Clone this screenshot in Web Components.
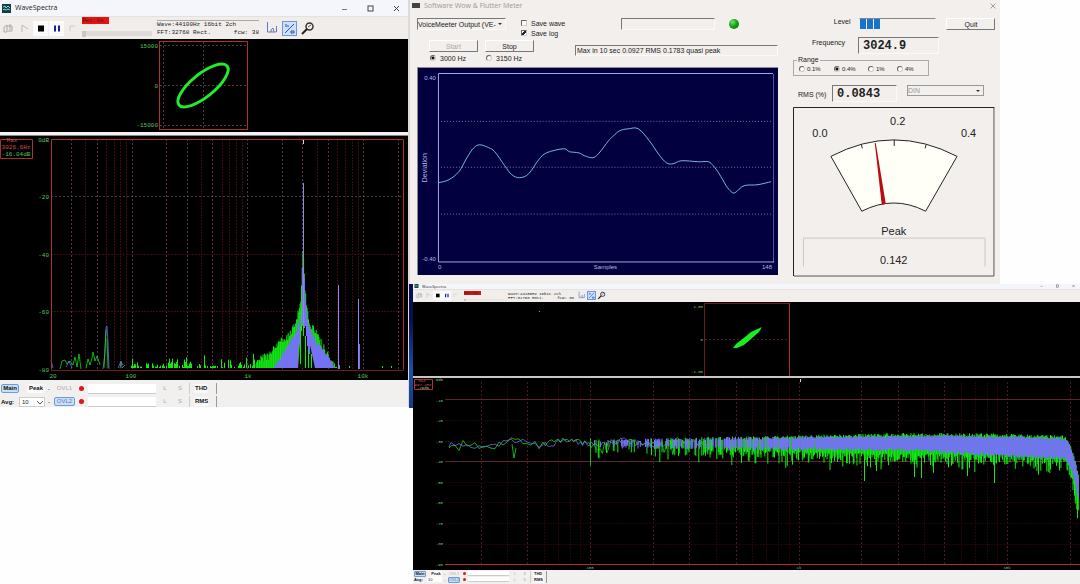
<!DOCTYPE html>
<html lang="en">
<head>
<meta charset="utf-8">
<title>Audio measurement desktop</title>
<style>
  body { margin: 0; background: #fefefe; font-family: "Liberation Sans", Arial, sans-serif; }
</style>
</head>
<body>
<measure-desktop>
  <wave-window slot="left" view="tone"></wave-window>
  <flutter-window slot="meter"></flutter-window>
  <wave-window slot="noise" view="noise" compact></wave-window>
</measure-desktop>

<script>
const define = (name, html, ready) => {
  const template = document.createElement('template');
  template.innerHTML = html;
  customElements.define(name, class extends HTMLElement {
    connectedCallback() {
      if (this.shadowRoot) return;
      this.attachShadow({ mode: 'open' }).append(template.content.cloneNode(true));
      if (ready) ready(this.shadowRoot, this);
    }
  });
};

const random = seed => () => (seed = (seed * 1664525 + 1013904223) % 4294967296) / 4294967296;
// Linear interpolation through a list of [x, y] knots.
const curve = (knots, x) => {
  for (let i = 1; i < knots.length; i++) {
    if (x <= knots[i][0]) {
      const [a, b] = knots[i - 1], [c, d] = knots[i];
      return b + (d - b) * (x - a) / (c - a);
    }
  }
  return knots[knots.length - 1][1];
};
const r1 = n => Math.round(n * 10) / 10;

/* ---------- spectrum with logarithmic frequency axis ---------- */
const logGrid = (x100, decade, top, bottom, right) => {
  let out = '';
  for (let d = 10; d <= 10000; d *= 10) for (let k = 1; k < 10; k++) {
    const f = d * k;
    if (f <= 20) continue;
    const x = Math.floor(x100 + decade * Math.log10(f / 100)) + 0.5;
    if (x < right) out += `<path class="${[1, 2, 3, 5].includes(k) ? 'major' : 'minor'}" d="M${x} ${top}V${bottom}"/>`;
  }
  return out;
};

function toneSpectrum() {
  const rnd = random(11);
  let green = '', blue = '';
  const skirt = [[254,367],[262,362],[270,357],[282,344],[290,336],[297,322],[301,300],[303,247],[305,290],[307,307],[310,326],[318,337],[327,355],[336,370]];
  for (let x = 52; x < 402; x += 1) {
    if (x < 258 || x > 337) {
      if (x > 130 && rnd() < 0.6 && x < 258) green += `M${x + .5} 232V${r1(231 - rnd() * rnd() * 14)}`;
      else if (x > 337 && rnd() < 0.06) green += `M${x + .5} 232v-2`;
    }
  }
  for (let x = 256; x < 337; x += 0.7) {
    const top = curve(skirt, x) - 138, h = 232 - top;
    green += `M${r1(x)} 232V${r1(Math.min(231, top + rnd() * 9 - (x < 300 ? 5 : 3)))}`;
  }
  const inner = [[274,232],[285,214],[293,202],[298,190],[301,175],[303,130],[305,165],[308,184],[313,200],[320,210],[327,219],[335,232]];
  for (let x = 275; x < 334; x += 0.6) {
    if (x > 298 && x < 310) continue;
    blue += `M${r1(x)} 232V${r1(Math.min(231, curve(inner, x) + rnd() * 7 - 3))}`;
  }
  return `<svg viewBox="0 0 408 244" role="img" aria-label="Spectrum, 3 kHz tone">
    <rect width="408" height="244"/>
    <g class="grid">${logGrid(132, 115.7, 3, 234, 404)}
      <path class="major" d="M51 60.5H404"/><path class="minor" d="M51 118.5H404M51 175.5H404"/></g>
    <path class="g" d="${green}"/>
    <path class="g soft" d="M60 233l2-8 3-1 2 4 3-3 3 4 2-8 2 10 2-13 2 15M86 232l2-9 2 6 2-7 1-6 2 9 2-5 3 9M120 232l1-6 2 3"/>
    <path class="b soft" d="M51 224l2 8M66 231l3-6 3 7M103 233l2-16 1-26 1-1 1 17 1 26M118 232l3-7 1 7 3-3"/>
    <path class="g soft" d="M104 232l1-20 1-18M107 203l1 29"/>
    <path class="b" d="${blue}"/>
    <path class="hole" d="M298 232L302 182 304 172 308 200 315 232Z"/>
    <path class="g" d="M300.500 228V177M301.500 195V165M303.500 200V150M305.500 232V200M308.500 232V212M311.500 232V218"/>
    <path class="g" d="M303.500 150V110"/>
    <path class="b" d="M302.500 190V132M304.500 192V142M305.500 190V165M306.500 200V175M298.500 212V190M299.500 208V184M300.500 190V178M307.500 210V184M308.500 214V188M309.500 218V194"/>
    <path class="b pale" d="M303.500 185V47M338.500 233V149M358.500 233V163"/><path class="b" d="M359.500 233V208M339.500 233v-4"/>
    <path class="pale white" d="M303.500 3v5"/>
    <path class="frame" d="M51.500 233.500V3.500H403.500V233.500"/><path class="frame dim" d="M51 234.500H404"/>
    <g class="lab end"><text x="49" y="6">0dB</text><text x="49" y="63">-20</text><text x="49" y="121">-40</text><text x="49" y="178">-60</text><text x="49" y="236">-80</text></g>
    <g class="lab mid"><text x="53" y="242">20</text><text x="131" y="242">100</text><text x="248" y="242">1k</text><text x="363" y="242">10k</text></g>
    <path class="frame" d="M1 3.500H32.500V22.500H.500V3.500"/>
    <g class="lab mid"><text class="red" x="12" y="6">Max</text><text class="red" x="16" y="13">3026.6Hz</text><text x="16" y="20">-16.04dB</text></g>
  </svg>`;
}

function noiseSpectrum() {
  const rnd = random(5);
  let thin = 'M36 70', thinBlue = 'M36 69', green = '', blue = '';
  for (let x = 38; x < 300; x += x < 130 ? 4 : 2.2) {
    const wave = Math.sin(x / 9) * 2 + (x < 90 ? 4 - x / 30 : 0);
    thinBlue += `L${r1(x)} ${r1(65 + wave + (rnd() - .5) * 6)}`;
    thin += `L${r1(x)} ${r1(65 + wave + (rnd() - .5) * 8 + (rnd() < .08 ? 9 : 0))}`;
  }
  const edge = x => x < 650 ? 0 : Math.pow((x - 650) / 16, 2) * 42;
  for (let x = 180; x < 666; x += 0.75) {
    const t = Math.min(1, (x - 160) / 330), e = edge(x);
    const dense = Math.min(1, (x - 180) / 260);
    if (rnd() < .1 + dense) {
      const top = 66 - t * 7 - rnd() * 4 + e + Math.max(0, x - 560) / 40;
      const drop = 67 + t * 9 + rnd() * rnd() * (14 + t * 6) + e * 1.3 + Math.max(0, x - 590) / 14;
      green += `M${r1(x)} ${r1(top)}V${r1(drop)}`;
    }
    if (rnd() < .1 + dense) {
      const top = 64 - t * 4 - rnd() * 3 + e + Math.max(0, x - 560) / 40;
      const low = 66 + t * 4 + rnd() * 4 + e + Math.max(0, x - 500) / 18;
      blue += `M${r1(x)} ${r1(top)}V${r1(low)}`;
    }
  }
  const h = [42.5, 63.5, 104.5, 124.5, 145.5, 166.5].map(y => `<path class="minor" d="M32 ${y}H667"/>`).join('');
  const names = ['0dB', '-10', '-20', '-30', '-40', '-50', '-60', '-70', '-80', '-90'];
  return `<svg viewBox="0 0 667 192" role="img" aria-label="Spectrum, noise">
    <rect width="667" height="192"/>
    <g class="grid">${logGrid(177.5, 208.5, 4, 186, 666)}${h}
      <path class="strong" d="M32 21.500H667M32 83.500H667"/></g>
    <path class="g soft" d="${thin}M99 66l2 14 2-10M177.500 60V88"/>
    <path class="b soft" d="${thinBlue}"/>
    <path class="g" d="${green}M451.500 70V103M508.500 75V100M581.500 78V105M554.500 75V98M501.500 75V99"/>
    <path class="b" d="${blue}"/>
    <path class="white pale" d="M387.500 1v3"/>
    <path class="frame" d="M32 186.500H667"/>
    <g class="lab end small">${names.map((n, i) => `<text x="30" y="${Math.round(3 + i * 20.5)}">${n}</text>`).join('')}</g>
    <g class="lab mid small"><text x="177" y="191">100</text><text x="386" y="191">1k</text><text x="594" y="191">10k</text></g>
    <path class="frame" d="M1.500 1.500H19.500V11.500H1.500Z"/>
    <g class="lab mid small"><text class="red" x="9" y="4">Max</text><text class="red" x="10" y="8">997.2Hz</text><text x="10" y="11">-29dB</text></g>
  </svg>`;
}

const toneScope = `<svg viewBox="0 0 408 93" role="img" aria-label="Lissajous figure"><rect width="408" height="93"/>
  <path class="major" d="M160 46.500H247M203.500 3V90M160 6.500H247M160 86.500H247M163.500 3V90"/>
  <rect class="box" x="159.500" y="2.500" width="88" height="88"/>
  <ellipse class="ring" cx="203" cy="46.500" rx="31" ry="11.500" transform="rotate(-39 203 46.500)"/>
  <g class="lab end"><text x="158" y="9">15000</text><text x="158" y="49">0</text><text x="158" y="88">-15000</text></g></svg>`;
const noiseScope = `<svg viewBox="0 0 667 74" role="img" aria-label="Lissajous figure"><rect width="667" height="74"/>
  <path class="major" d="M292 37.500H376"/><path class="frame dim" d="M291.500 74V1.500H376"/><path class="frame" d="M376.500 1V74"/>
  <path class="blob" d="M320 46l3-4 9-7 6-5 11-5-3 5-8 7-7 6-7 3z"/><path class="blob" d="M126 9h1v1h-1z"/>
  <g class="lab end small"><text x="290" y="6">1.00</text><text x="290" y="39">0</text><text x="290" y="71">-1.00</text></g></svg>`;

define('signal-plot', `<style>
  :host { display: block; background: #000; }
  svg { display: block; width: 100%; height: auto; fill: none; font-family: "Liberation Mono", monospace; }
  svg > rect:first-child { fill: #000; }
  .major { stroke: #5c363a; stroke-dasharray: 2 2; } .minor { stroke: #3c0c10; stroke-dasharray: 2 1; }
  .strong { stroke: #612529; }
  :host([kind^="noise"]) .major { stroke: #481a1e; } :host([kind^="noise"]) .minor { stroke: #240607; }
  .frame, .box { stroke: #a83232; } .dim { stroke: #701a1e; }
  .g { stroke: #12ea12; } .b { stroke: #796eff; } .soft { stroke-opacity: .75; }
  .pale { stroke: #9088e0; } .white { stroke: #ecc; } .hole { fill: #041204; }
  .ring { stroke: #22ec2c; stroke-width: 3; } .blob { fill: #18ee20; }
  .lab { fill: #5cc05c; font-size: 6px; } .small { fill: #7ad07a; font-size: 4px; }
  .end { text-anchor: end; } .mid { text-anchor: middle; } .red { fill: #d05050; }
</style><div></div>`, (root, host) => {
  const make = { tone: toneSpectrum, noise: noiseSpectrum, 'tone-scope': () => toneScope, 'noise-scope': () => noiseScope };
  root.querySelector('div').innerHTML = make[host.getAttribute('kind')]();
});

/* ---------- title bar ---------- */
define('title-bar', `<style>
  :host { display: flex; align-items: center; height: 16px; gap: 4px; padding: 0 7px 0 2px; background: #f5f6fb; color: #222; font: 7px/10px "Open Sans", sans-serif; }
  :host([compact]) { height: 5px; gap: 3px; padding: 0 3px 0 1px; font-size: 4px; line-height: 5px; }
  svg { width: 9px; height: 9px; } :host([compact]) svg { width: 5px; height: 4px; }
  .name { flex: 1; }
  button { all: unset; width: 9px; height: 9px; margin-left: 13px; }
  :host([compact]) button { width: 6px; height: 4px; margin-left: 7px; }
  button svg { display: block; width: 100%; height: 100%; fill: none; stroke: #444; }
</style>
<svg viewBox="0 0 9 9"><rect width="9" height="9" fill="#123f46"/><path d="M1 3l2-1 1 2 2-2 2 2M1 6l1-1 2 1 2-1 2 1" fill="none" stroke="#8fd6d2"/></svg>
<span class="name"><slot></slot></span>
<button aria-label="Minimize"><svg viewBox="0 0 9 9"><path d="M2 5.500h5" stroke-width=".7"/></svg></button>
<button aria-label="Maximize"><svg viewBox="0 0 9 9"><rect x="2" y="2" width="5" height="5"/></svg></button>
<button aria-label="Close"><svg viewBox="0 0 9 9"><path d="M2 2l5 5M7 2l-5 5"/></svg></button>`);

/* ---------- WaveSpectra toolbar ---------- */
define('wave-toolbar', `<style>
  :host { display: flex; align-items: center; height: 23px; box-sizing: border-box; background: #f0edeb; color: #222; font: 6px/8px "Liberation Mono", monospace; border-top: 1px solid #e4e1e0; }
  button { all: unset; flex: none; width: 15px; height: 15px; } button svg { display: block; width: 100%; height: 100%; fill: none; }
  .play { display: flex; flex: none; width: 82px; gap: 1px; padding-left: 1px; box-sizing: border-box; }
  .play button:nth-child(3), .play button:nth-child(4) { background: #fbfbfc; }
  .pos { flex: none; width: 71px; align-self: stretch; display: flex; flex-direction: column; }
  .pos b { display: block; width: 27px; height: 7px; background: #e51414; color: #6b0808; font-weight: 400; line-height: 7px; white-space: nowrap; }
  input { appearance: none; margin: 7px 0 0; width: 70px; height: 5px; background: #dedbd9; }
  input::-webkit-slider-thumb { appearance: none; width: 4px; height: 6px; background: #c9c6c4; }
  .info { flex: none; width: 102px; margin: 0 5px 0 4px; display: flex; flex-wrap: wrap; justify-content: space-between; white-space: nowrap; border-top: 1px solid #aaa; }
  .info span:first-child { width: 100%; }
  .icons { display: flex; gap: 3px; } .icons .on { background: #cfe0fb; box-shadow: 0 0 0 1px #6f95dd inset; }
  :host([compact]) { height: 13px; font-size: 4px; line-height: 4px; }
  :host([compact]) button { width: 9px; height: 9px; }
  :host([compact]) .play { width: 51px; gap: 0; padding-left: 2px; }
  :host([compact]) .pos { width: 44px; } :host([compact]) .pos b { width: 17px; height: 4px; line-height: 4px; margin-top: 1px; background: #c81c1c; }
  :host([compact]) input { width: 40px; height: 2px; margin-top: 4px; background: #e8e5e3; }
  :host([compact]) input::-webkit-slider-thumb { width: 2px; height: 2px; }
  :host([compact]) .info { width: 66px; margin: 0 3px 0 0; border: 0; }
  :host([compact]) .icons { gap: 1px; }
</style>
<div class="play">
  <button aria-label="Open"><svg viewBox="0 0 15 15" stroke="#aaa"><path d="M3 11V6l3-2v7zM6 5h5v5H7M9 3v6"/></svg></button>
  <button aria-label="Play"><svg viewBox="0 0 15 15" stroke="#bbb"><path d="M5 11V4l6 4"/></svg></button>
  <button aria-label="Stop"><svg viewBox="0 0 15 15"><path d="M5 4.500h6v6H5z" fill="#000"/></svg></button>
  <button aria-label="Pause"><svg viewBox="0 0 15 15"><path d="M5 4.500h2v6H5zM9 4.500h2v6H9z" fill="#1420a8"/></svg></button>
  <button aria-label="Record"><svg viewBox="0 0 15 15" stroke="#ccc"><path d="M5 10V5h5"/></svg></button>
</div>
<div class="pos"><b>Rec:0s</b><input type="range" value="0" aria-label="Position"></div>
<div class="info"><span>Wave:44100Hz 16bit 2ch</span><span>FFT:32768 Rect.</span><span>fcw: 38</span></div>
<div class="icons">
  <button aria-label="Wave view"><svg viewBox="0 0 15 15" stroke="#6677bb"><path d="M3.500 1v10H12M7 11V9l2-2 1 4M12.500 5v6"/></svg></button>
  <button class="on" aria-label="Log scale"><svg viewBox="0 0 15 15" stroke="#264fb5"><path d="M3 12L12 3M4 3v3M6 4v2M9 10h3v2H9z"/></svg></button>
  <button aria-label="Settings"><svg viewBox="0 0 15 15"><circle cx="9.500" cy="5.500" r="3.500" stroke="#333" stroke-width="1.500"/><path d="M7 8l-5 5" stroke="#222" stroke-width="2"/><path d="M8 6l3-2" stroke="#555"/></svg></button>
</div>`);

/* ---------- WaveSpectra bottom controls ---------- */
define('wave-controls', `<style>
  :host { display: grid; grid-template-columns: 44px 3px 21px 7px 68px 12px 12px 28px; column-gap: 3px; row-gap: 2px; align-items: center; height: 27px; padding: 3px 0 0 1px; box-sizing: border-box; background: #f2f0ee; color: #111; font: 6px/8px "Liberation Sans", sans-serif; }
  button { all: unset; height: 9px; box-sizing: border-box; text-align: center; border: 1px solid transparent; border-radius: 2px; line-height: 7px; }
  .on { border-color: #6d9bd8; background: #cadff5; } .dim { color: #aaa; } .blue { color: #5878c8; }
  .first { display: flex; justify-content: space-between; align-items: center; font-weight: 700; }
  .first button { width: 18px; } .box { background: #fafafa; }
  i { justify-self: center; width: 5px; height: 5px; border-radius: 50%; background: #e01616; }
  input, select { appearance: none; box-sizing: border-box; margin: 0; padding: 0 2px; border: 1px solid #ccc; border-width: 0 0 1px; border-radius: 0; background: #fff; font: inherit; font-weight: 400; height: 10px; width: 100%; }
  select { width: 26px; border-width: 1px; color: #222;
    background: linear-gradient(45deg, transparent 40%, #555 40% 65%, transparent 65%) 17px 3px / 3px 3px no-repeat, linear-gradient(-45deg, transparent 40%, #555 40% 65%, transparent 65%) 20px 3px / 3px 3px no-repeat #fff; }
  .last { box-sizing: border-box; border-left: 1px solid #ccc; border-right: 1px solid #999; padding: 1px 4px; font-weight: 700; }
  .last button { display: block; background: #fafafa; }
  :host([compact]) { height: 15px; font-size: 4px; line-height: 5px; grid-template-columns: 28px 2px 12px 4px 41px 8px 7px 17px; column-gap: 2px; row-gap: 0; padding: 1px 0 1px 1px; border-bottom: 1px solid #ccc; }
  :host([compact]) button { height: 6px; line-height: 4px; border-radius: 1px; } :host([compact]) .first button { width: 12px; }
  :host([compact]) input, :host([compact]) select { height: 5px; padding: 0 1px; } :host([compact]) select { width: 15px; border-width: 0; background: #fff; }
  :host([compact]) i { width: 3px; height: 3px; } :host([compact]) .last { padding: 0 2px; }
</style>
<div class="first"><button class="on">Main</button><button class="box">Peak</button></div><span>-</span><button class="dim">OVL1</button><i></i><input aria-label="Overlay 1 name"><button class="dim">L</button><button class="dim">S</button><div class="last"><button>THD</button></div>
<div class="first"><label for="avg">Avg:</label><select id="avg"><option>10</option></select></div><span>-</span><button class="on blue">OVL2</button><i></i><input aria-label="Overlay 2 name"><button class="dim">L</button><button class="dim">S</button><div class="last"><button>RMS</button></div>`);

define('wave-window', `<style>
  :host { display: block; background: #f2f0ee; }
  .split { height: 4px; background: #f4f2f0; border-bottom: 1px solid #888; box-sizing: border-box; }
  :host([compact]) .split { height: 2px; border: 0; background: #c9c6c6; }
</style>
<title-bar>WaveSpectra</title-bar><wave-toolbar></wave-toolbar>
<div class="scope"></div><div class="split"></div><div class="spectrum"></div>
<wave-controls></wave-controls>`, (root, host) => {
  if (host.hasAttribute('compact')) root.querySelectorAll('title-bar, wave-toolbar, wave-controls').forEach(e => e.setAttribute('compact', ''));
  const view = host.getAttribute('view');
  for (const [cls, kind] of [['scope', view + '-scope'], ['spectrum', view]]) {
    const plot = document.createElement('signal-plot');
    plot.setAttribute('kind', kind);
    root.querySelector('.' + cls).append(plot);
  }
});

/* ---------- wow & flutter pieces ---------- */
define('deviation-graph', `<style>
  :host { display: block; border: 1px solid #8a8a90; border-width: 1px 0 0 1px; box-sizing: border-box; background: #02003e; }
  svg { display: block; width: 100%; height: auto; fill: none; }
  text { fill: #b8b6ea; font: 6px "Liberation Sans", sans-serif; } .axis { stroke: #a9a7e2; } .edge { stroke: #5654a0; }
  .dots { stroke: #7775ac; stroke-dasharray: 1 2; } .trace { stroke: #76b7e0; }
  .side { font-size: 7px; }
</style>
<svg viewBox="416 67 361 208" role="img" aria-label="Deviation over samples">
  <path class="dots" d="M439 120.500H772M439 166.500H772M439 213.500H772"/>
  <path class="edge" d="M772.500 73V262"/><path class="axis" d="M772 72.500H436.500V261.500H773"/>
  <polyline class="trace" points=""/>
  <text x="434" y="79" text-anchor="end">0.40</text><text x="434" y="261" text-anchor="end">-0.40</text>
  <text x="436" y="269">0</text><text x="604" y="269" text-anchor="middle">Samples</text><text x="771" y="269" text-anchor="end">148</text>
  <text class="side" transform="translate(425 167) rotate(-90)" text-anchor="middle">Deviation</text>
</svg>`, root => {
  const p = [[437,182],[447,179],[457,171],[465,157],[472,147],[478,144],[487,147],[493,151],[503,165],[510,174],[518,177],[527,173],[537,159],[545,152],[562,148],[568,151],[577,152],[583,155],[591,157],[597,153],[607,140],[610,137],[618,130],[627,128],[637,128],[648,140],[657,153],[665,162],[672,163],[680,160],[697,161],[707,161],[712,165],[718,173],[725,185],[730,191],[734,192],[743,185],[757,184],[770,181]];
  // Catmull-Rom sampling gives the smooth trace through the measured values.
  const out = [];
  for (let i = 0; i < p.length - 1; i++) {
    const a = p[i - 1] || p[i], b = p[i], c = p[i + 1], d = p[i + 2] || c;
    for (let t = 0; t < 1; t += .25) out.push([0, 1].map(k => r1(.5 * (2 * b[k] + (c[k] - a[k]) * t + (2 * a[k] - 5 * b[k] + 4 * c[k] - d[k]) * t * t + (3 * b[k] - a[k] - 3 * c[k] + d[k]) * t * t * t))).join());
  }
  root.querySelector('polyline').setAttribute('points', out.join(' ') + ' 770,181');
});

define('needle-meter', `<style>
  :host { display: block; } svg { display: block; width: 100%; height: auto; fill: none; stroke: #222; }
  text { fill: #222; stroke: none; font: 11px "Liberation Sans", sans-serif; text-anchor: middle; }
</style>
<svg viewBox="793 107 203 170" role="img" aria-label="Peak meter">
  <path d="M994.500 108V276.500H794" stroke="#555"/><path d="M793.500 276.500V107.500H995" stroke="#222"/>
  <path fill="#fffff8" d="M831 156.500Q894 123.500 957.500 156.500L926 211.500Q894 195 862 211.500Z"/>
  <path d="M861.500 144.500l1 4M894.500 140v6M926.500 144.500l-1 4"/>
  <path fill="#b80c10" stroke="none" d="M875 143h1L886 204l-4 1z"/>
  <text x="820" y="137">0.0</text><text x="898" y="125">0.2</text><text x="969" y="137">0.4</text><text x="894" y="235">Peak</text>
  <path d="M803.500 267V238.500H985.500V267" stroke="#ccc8c6"/><text x="894" y="264">0.142</text>
</svg>`);

define('flutter-window', `<style>
  :host { display: block; background: #f2efed; color: #222; font: 7px/9px "Liberation Sans", sans-serif; }
  header { display: flex; align-items: center; height: 11px; gap: 4px; padding: 0 3px 0 2px; color: #999; font-family: "Open Sans", sans-serif; }
  header span { flex: 1; } header i { width: 8px; height: 5px; background: #444; } header button { all: unset; width: 8px; height: 8px; }
  header svg { display: block; stroke: #888; fill: none; }
  main { display: grid; grid-template-columns: 362fr 203fr; column-gap: 15px; padding: 7px 5px 7px 7px; }
  .row { display: flex; align-items: flex-start; }
  button.push { appearance: none; box-sizing: border-box; width: 49px; height: 12px; flex: none; margin: 0; padding: 0; border: 1px solid; border-color: #fff #777 #777 #fff; background: #f2efed; color: #222; font: inherit; line-height: 9px; }
  button.push:disabled { color: #aaa; }
  .sunk { box-sizing: border-box; border: 1px solid; border-color: #777 #fafafa #fafafa #777; background: transparent; }
  select { appearance: none; box-sizing: border-box; width: 89px; height: 12px; margin: 0; padding: 0 8px 0 0; border-radius: 0; font: inherit; color: #222; opacity: 1; flex: none; }
  .pick { position: relative; display: block; flex: none; } .pick::after { content: ""; position: absolute; right: 4px; top: 5px; border: 2px solid transparent; border-top-color: #333; }
  .pick select:disabled { width: 77px; color: #999; height: 11px; border-color: #999; }
  label { display: flex; align-items: center; gap: 4px; height: 10px; white-space: nowrap; }
  input { appearance: none; margin: 0; width: 6px; height: 6px; box-sizing: border-box; background: #fff; border: 1px solid; border-color: #666 #ccc #ccc #666; flex: none; }
  input[type=radio] { border-radius: 50%; } input[type=radio]:checked { background: radial-gradient(circle, #111 0 1px, #fff 2px); }
  input[type=checkbox]:checked { background: linear-gradient(135deg, #fff 35%, #222 35% 65%, #fff 65%); }
  .top { height: 22px; } .checks { margin: 0 0 0 15px; flex: 1; } .level-in { width: 94px; height: 12px; flex: none; }
  .led { width: 10px; height: 10px; margin: 1px 39px 0 14px; border-radius: 50%; background: radial-gradient(circle at 35% 30%, #6fe86f, #19a419 45%, #0a6a0a); flex: none; }
  .mid { height: 27px; padding-left: 12px; } .col { width: 56px; flex: none; } .col label { margin-top: 1px; padding-left: 1px; }
  .log { flex: 1; margin: 5px 0 0 34px; height: 11px; white-space: nowrap; padding-left: 1px; }
  .r1 { height: 19px; justify-content: flex-end; } .r1 .cap { margin-right: 9px; line-height: 7px; }
  .level { display: flex; gap: 1px; width: 77px; height: 12px; margin-right: 10px; flex: none; border-color: #888 transparent transparent; }
  .level b { width: 6px; background: #1874c8; }
  .r2 { padding-left: 19px; height: 19px; } .r2 .cap { width: 46px; padding-top: 1px; }
  output { display: block; height: 17px; padding-left: 4px; font: 700 12px/16px "Liberation Mono", monospace; color: #222; }
  .r2 output { width: 81px; }
  fieldset { min-width: 0; width: 136px; height: 20px; box-sizing: border-box; margin: 0; padding: 0 0 0 5px; border: 1px solid #aaa; display: block; }
  legend { padding: 0 1px; margin-left: -2px; line-height: 8px; height: 8px; } .opts { display: grid; grid-template-columns: 35px 34px 29px 28px; } .opts label { gap: 2px; font-size: 6px; }
  .r3 { height: 22px; margin-top: 9px; padding-left: 5px; } .r3 .cap { width: 34px; padding-top: 5px; flex: none; } .r3 output { width: 65px; margin-right: 10px; }
</style>
<header><i></i><span>Software Wow &amp; Flutter Meter</span><button aria-label="Close"><svg viewBox="0 0 8 8"><path d="M1.500 1.500l5 5M6.500 1.500l-5 5" stroke-width=".8"/></svg></button></header>
<main>
  <section>
    <div class="row top">
      <span class="pick"><select class="sunk" aria-label="Input device"><option>VoiceMeeter Output (VE-</option></select></span>
      <div class="checks"><label><input type="checkbox">Save wave</label><label><input type="checkbox" checked>Save log</label></div>
      <div class="level-in sunk"></div><span class="led" role="img" aria-label="Signal present"></span>
    </div>
    <div class="row mid">
      <div class="col"><button class="push" disabled>Start</button><label><input type="radio" name="carrier" checked>3000 Hz</label></div>
      <div class="col"><button class="push">Stop</button><label><input type="radio" name="carrier">3150 Hz</label></div>
      <div class="log sunk">Max in 10 sec 0.0927 RMS 0.1783 quasi peak</div>
    </div>
    <deviation-graph></deviation-graph>
  </section>
  <section>
    <div class="row r1"><span class="cap">Level</span><div class="level sunk"><b></b><b></b><b></b></div><button class="push">Quit</button></div>
    <div class="row r2"><span class="cap">Frequency</span><output class="sunk">3024.9</output></div>
    <fieldset><legend>Range</legend><div class="opts"><label><input type="radio" name="range">0.1%</label><label><input type="radio" name="range" checked>0.4%</label><label><input type="radio" name="range">1%</label><label><input type="radio" name="range">4%</label></div></fieldset>
    <div class="row r3"><span class="cap">RMS (%)</span><output class="sunk">0.0843</output><span class="pick"><select class="sunk" disabled aria-label="Weighting"><option>DIN</option></select></span></div>
    <needle-meter></needle-meter>
  </section>
</main>`);

/* ---------- desktop ---------- */
define('measure-desktop', `<style>
  :host { display: grid; grid-template-columns: 409fr 671fr; align-items: start; }
  .left { border-right: 1px solid #dcdad9; }
  .meter { padding-left: 1px; width: 88%; background: #dcdad9; }
  .noise { display: grid; grid-template-columns: 4px 1fr; }
  .wall { height: 124px; background: linear-gradient(#0a0e4e, #0a1050 30%, #2050a8 70%, #183888); }
</style>
<div class="left"><slot name="left"></slot></div>
<div><div class="meter"><slot name="meter"></slot></div><div class="noise"><div class="wall"></div><slot name="noise"></slot></div></div>`);
</script>
</body>
</html>
